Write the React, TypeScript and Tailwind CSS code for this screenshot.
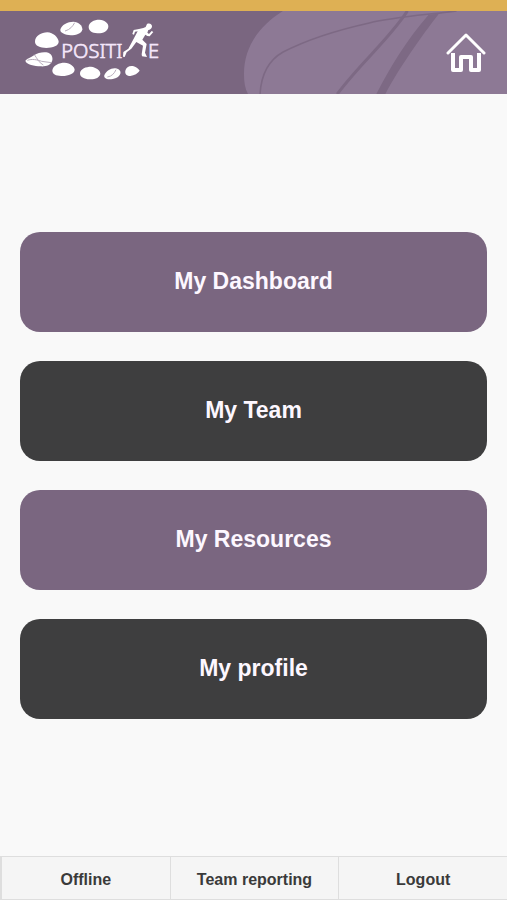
const menuItems = [
  { label: "My Dashboard", className: "bg-[#7a6680]" },
  { label: "My Team", className: "bg-[#3e3e3f]" },
  { label: "My Resources", className: "bg-[#7a6680]" },
  { label: "My profile", className: "bg-[#3e3e3f]" },
];

const footerItems = ["Offline", "Team reporting", "Logout"];

function Logo() {
  return (
    <svg viewBox="72 54 408 207" className="h-[69px] w-[136px]" fill="#fff">
      {/* Ring of pebbles */}
      <path d="M181 89C184 74 203 65 220 65C236 66 247 76 247 88C246 100 229 106 212 106C196 104 180 99 181 89Z" />
      <path d="M266 81C266 67 282 59 298 59C315 60 326 70 325 80C324 93 308 101 292 100C276 99 266 92 266 81Z" />
      <path d="M105 124C106 108 124 97 142 97C160 98 174 112 176 124C177 138 158 144 139 144C121 144 104 138 105 124Z" />
      <path d="M76 182C83 175 92 173 102 166C114 157 132 155 145 158C156 163 160 174 156 184C152 196 137 200 122 199C104 198 79 194 76 182Z" />
      <path d="M157 211C159 196 178 188 194 188C211 189 223 199 224 209C223 221 206 227 187 228C170 229 156 223 157 211Z" />
      <path d="M240 219C242 206 258 200 273 200C289 202 301 211 301 221C300 232 285 239 269 238C253 237 239 231 240 219Z" />
      <path d="M313 226C318 213 332 204 346 205C358 206 363 214 361 221C357 232 342 238 328 238C317 238 311 233 313 226Z" />
      <path d="M376 212C378 201 390 196 401 199C409 201 415 207 419 212C414 220 403 226 391 228C381 228 374 222 376 212Z" />
      <g fill="none" stroke="#b9adbd" strokeWidth="3">
        <path d="M195 93C210 89 218 79 224 68" />
        <path d="M103 164C111 174 116 188 130 195M82 181C96 176 111 179 125 184L154 188" />
        <path d="M322 231C336 229 343 220 348 209" />
      </g>
      <g fill="#f5e6fb" stroke="#f5e6fb" strokeWidth="2" className="font-['Noto_Sans',sans-serif] text-[60px] font-light">
        <text x="184" y="173">
          POSITI
        </text>
        <text x="444" y="173">
          E
        </text>
      </g>
      {/* Runner */}
      <path d="M441 72C449 68 457 73 456 80C455 86 450 89 445 90L442 98L447 102L455 93L460 96L449 109L442 108L436 104L427 119L440 132L435 158L441 171L426 169L425 163L429 137L409 126L394 146L380 157L374 171L369 170L370 156L385 146L405 109L413 94L405 95L402 104L397 102L401 90L417 87L430 84L437 81Z" />
    </svg>
  );
}

function HomeIcon() {
  return (
    <svg viewBox="0 0 40 40" className="size-10" fill="none" stroke="#fff">
      <path d="M2 20L20 2L38 20" strokeWidth="3" strokeLinecap="round" strokeLinejoin="round" />
      <path d="M7 20V37H15V24H25V37H33V20" strokeWidth="4" strokeLinejoin="round" />
    </svg>
  );
}

function HeaderSwoosh() {
  return (
    <svg
      viewBox="0 0 263 83"
      preserveAspectRatio="xMaxYMid slice"
      className="absolute inset-y-0 right-0 h-full w-[52%] overflow-visible"
      aria-hidden="true"
    >
      <path d="M40 0C16 15 1 36 1 63C1 71 2 78 5 83V84H270V-1H40Z" fill="#8d7995" />
      <g fill="none" stroke="#7d6984">
        <path d="M17 83C18 66 24 50 40 41C67 27 99 18 126 12C151 6 183 4 213 0" strokeWidth="1.5" />
        <path d="M164 0C146 28 117 52 94 83" strokeWidth="3" />
      </g>
      <path d="M185 4L213 0L196 2C178 25 155 58 142 83H133C146 57 164 28 185 4Z" fill="#7d6984" />
    </svg>
  );
}

export default function App() {
  return (
    <div className="flex min-h-screen flex-col bg-[#f9f9f9] font-['Liberation_Sans',Arial,sans-serif]">
      <header className="border-t-[11px] border-[#deb054]">
        <div className="relative flex h-[83px] items-center justify-between overflow-hidden bg-[#7a6680] pr-[21px] pl-6">
          <HeaderSwoosh />
          <a href="#" aria-label="Positive" className="relative">
            <Logo />
          </a>
          <a href="#" aria-label="Home" className="relative">
            <HomeIcon />
          </a>
        </div>
      </header>

      <main className="flex flex-1 flex-col justify-center gap-[29px] px-5">
        {menuItems.map((item) => (
          <button
            key={item.label}
            type="button"
            className={`h-[100px] w-full rounded-[20px] text-[23px] font-bold text-[#fdf7ff] ${item.className}`}
          >
            {item.label}
          </button>
        ))}
      </main>

      <footer className="grid grid-cols-3 border-y border-l border-[#dedede] bg-[#f5f5f5]">
        {footerItems.map((label) => (
          <button
            key={label}
            type="button"
            className="h-[42px] border-l border-[#dedede] pt-1 text-base font-bold text-[#3a3a3a]"
          >
            {label}
          </button>
        ))}
      </footer>
    </div>
  );
}
